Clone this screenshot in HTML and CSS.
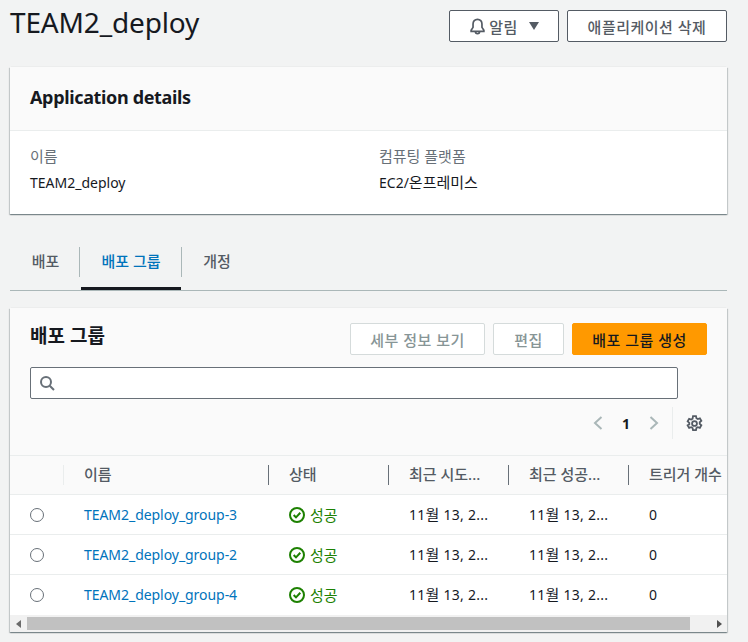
FILE: index.html
```html
<!DOCTYPE html>
<html lang="ko">
<head>
    <meta charset="UTF-8">
    <meta name="viewport" content="width=device-width, initial-scale=1.0">
    <title>TEAM2_deploy</title>
    <link rel="stylesheet" href="styles.css">
</head>
<body>
    <div class="page">
        <header class="page-head">
            <h1>TEAM2_deploy</h1>
            <div class="page-actions">
                <button class="btn btn-notify">
                    <svg class="bell" viewBox="0 0 16 16" width="17" height="17"><path d="M8 1.200c-2.600 0-4.200 2-4.200 4.400v3.200L2 11.600v.9h12v-.9l-1.800-2.800V5.600C12.200 3.200 10.600 1.200 8 1.200zM6 12.500c0 1.300.9 2.300 2 2.300s2-1 2-2.300"/></svg>
                    <span>알림</span>
                    <span class="caret"></span>
                </button>
                <button class="btn btn-delete">애플리케이션 삭제</button>
            </div>
        </header>

        <section class="card details">
            <div class="card-head"><h2>Application details</h2></div>
            <div class="detail-grid">
                <div class="detail">
                    <div class="detail-label">이름</div>
                    <div class="detail-value">TEAM2_deploy</div>
                </div>
                <div class="detail">
                    <div class="detail-label">컴퓨팅 플랫폼</div>
                    <div class="detail-value">EC2/<span class="ko">온프레미스</span></div>
                </div>
            </div>
        </section>

        <nav class="tabs">
            <a class="tab tab-first">배포</a>
            <a class="tab tab-active">배포 그룹</a>
            <a class="tab tab-last">개정</a>
        </nav>

        <section class="card groups">
            <div class="groups-top">
                <h2>배포 그룹</h2>
                <div class="groups-actions">
                    <button class="btn btn-disabled btn-detail">세부 정보 보기</button>
                    <button class="btn btn-disabled btn-edit">편집</button>
                    <button class="btn btn-primary">배포 그룹 생성</button>
                </div>
            </div>
            <div class="search">
                <svg viewBox="0 0 16 16" width="16" height="16"><circle cx="7" cy="7" r="5"/><path d="M10.700 10.700 15 15"/></svg>
            </div>
            <div class="pager">
                <svg class="pager-arrow" viewBox="0 0 10 16" width="10" height="16"><path d="M8.500 2 2 8l6.500 6"/></svg>
                <span class="pager-num">1</span>
                <svg class="pager-arrow" viewBox="0 0 10 16" width="10" height="16"><path d="M1.500 2 8 8l-6.500 6"/></svg>
                <span class="pager-sep">
                    <svg class="gear" viewBox="0 0 16 16" width="17" height="17"><path d="M6.600 1h2.800l.4 2 1.300.75 1.950-.65 1.400 2.400-1.550 1.350v1.500l1.550 1.350-1.400 2.400-1.950-.65-1.300.75-.4 2H6.600l-.4-2-1.300-.75-1.950.65-1.400-2.400L3.100 8.850v-1.500L1.550 6 2.950 3.600l1.950.65 1.300-.75z"/><circle cx="8" cy="8" r="2.300"/></svg>
                </span>
            </div>
            <div class="table">
                <div class="row row-head">
                    <div class="cell cell-radio"></div>
                    <div class="cell cell-name">이름</div>
                    <div class="cell cell-status">상태</div>
                    <div class="cell cell-date">최근 시도...</div>
                    <div class="cell cell-date">최근 성공...</div>
                    <div class="cell cell-count">트리거 개수</div>
                </div>
                <div class="row">
                    <div class="cell cell-radio"><span class="radio"></span></div>
                    <div class="cell cell-name"><a>TEAM2_deploy_group-3</a></div>
                    <div class="cell cell-status"><span class="status"><svg viewBox="0 0 16 16" width="16" height="16"><circle cx="8" cy="8" r="7"/><path d="m4.700 8 2.300 2.400 4.300-4.600"/></svg>성공</span></div>
                    <div class="cell cell-date"><span>11<span class="ko">월</span> 13, 2...</span></div>
                    <div class="cell cell-date"><span>11<span class="ko">월</span> 13, 2...</span></div>
                    <div class="cell cell-count">0</div>
                </div>
                <div class="row">
                    <div class="cell cell-radio"><span class="radio"></span></div>
                    <div class="cell cell-name"><a>TEAM2_deploy_group-2</a></div>
                    <div class="cell cell-status"><span class="status"><svg viewBox="0 0 16 16" width="16" height="16"><circle cx="8" cy="8" r="7"/><path d="m4.700 8 2.300 2.400 4.300-4.600"/></svg>성공</span></div>
                    <div class="cell cell-date"><span>11<span class="ko">월</span> 13, 2...</span></div>
                    <div class="cell cell-date"><span>11<span class="ko">월</span> 13, 2...</span></div>
                    <div class="cell cell-count">0</div>
                </div>
                <div class="row row-last">
                    <div class="cell cell-radio"><span class="radio"></span></div>
                    <div class="cell cell-name"><a>TEAM2_deploy_group-4</a></div>
                    <div class="cell cell-status"><span class="status"><svg viewBox="0 0 16 16" width="16" height="16"><circle cx="8" cy="8" r="7"/><path d="m4.700 8 2.300 2.400 4.300-4.600"/></svg>성공</span></div>
                    <div class="cell cell-date"><span>11<span class="ko">월</span> 13, 2...</span></div>
                    <div class="cell cell-date"><span>11<span class="ko">월</span> 13, 2...</span></div>
                    <div class="cell cell-count">0</div>
                </div>
            </div>
            <div class="scrollbar">
                <span class="scroll-arrow scroll-left"></span>
                <span class="scroll-thumb"></span>
                <span class="scroll-arrow scroll-right"></span>
            </div>
        </section>
    </div>
</body>
</html>
```

FILE: styles.css
```css
* {
    box-sizing: border-box;
}
html, body {
    height: 100%;
}
body {
    margin: 0;
    background-color: #f2f3f3;
    color: #16191f;
    font-family: 'Noto Sans', 'Noto Sans CJK KR', sans-serif;
    font-size: 14px;
    overflow: hidden;
}
.ko {
    font-size: 15px;
    line-height: 1;
}
.page {
    width: 717px;
    margin-left: 10px;
}
.page-head {
    display: flex;
    justify-content: space-between;
    height: 67px;
    padding-top: 10px;
}
h1 {
    margin: 0;
    font-size: 28px;
    font-weight: 400;
    line-height: 24px;
    letter-spacing: -0.15px;
}
h2 {
    margin: 0;
    font-size: 19px;
    font-weight: 700;
}
.page-actions {
    display: flex;
    gap: 8px;
}
.btn {
    height: 32px;
    padding: 0;
    border: 1px solid #545b64;
    border-radius: 2px;
    background-color: #fff;
    color: #545b64;
    font-family: inherit;
    font-size: 15px;
    font-weight: 500;
    letter-spacing: 0.5px;
    display: flex;
    align-items: center;
    justify-content: center;
}
.btn-notify {
    width: 110px;
    gap: 3px;
}
.btn-delete {
    width: 160px;
}
.bell {
    fill: none;
    stroke: #545b64;
    stroke-width: 1.600;
}
.caret {
    width: 0;
    height: 0;
    margin-left: 8px;
    border-left: 5px solid transparent;
    border-right: 5px solid transparent;
    border-top: 8px solid #545b64;
}
.card {
    background-color: #fff;
    box-shadow: 0 1px 1px 0 rgba(0, 28, 36, 0.3), 1px 1px 1px 0 rgba(0, 28, 36, 0.15), -1px 1px 1px 0 rgba(0, 28, 36, 0.15), 0 -1px 1px -1px rgba(0, 28, 36, 0.15);
}
.details {
    height: 147px;
}
.card-head {
    height: 64px;
    padding: 0 20px 4px;
    display: flex;
    align-items: center;
    background-color: #fafafa;
    border-bottom: 1px solid #eaeded;
}
.card-head h2 {
    font-size: 18px;
    letter-spacing: -0.35px;
}
.detail-grid {
    display: grid;
    grid-template-columns: 349px 1fr;
    padding: 14px 20px 0;
}
.detail-label {
    color: #687078;
    font-size: 15px;
    line-height: 22px;
}
.detail-value {
    margin-top: 5px;
    line-height: 22px;
}
.tabs {
    display: flex;
    height: 76px;
    margin-top: 1px;
    padding-top: 32px;
    border-bottom: 1px solid #aab7b8;
}
.tab {
    height: 43px;
    color: #545b64;
    font-size: 15px;
    font-weight: 500;
    padding-top: 3px;
    position: relative;
    text-align: center;
    line-height: 22px;
}
.tab-first {
    width: 71px;
}
.tab-active {
    width: 100px;
    color: #0073bb;
    border-bottom: 3px solid #16191f;
    margin-bottom: -1px;
}
.tab-last {
    width: 72px;
}
.tab-first::after, .tab-active::after {
    content: "";
    position: absolute;
    top: 0;
    height: 30px;
    width: 1px;
    background-color: #aab7b8;
}
.tab-first::after {
    right: 1px;
}
.tab-active::after {
    right: -1px;
}
.groups {
    margin-top: 17px;
    height: 324px;
    background-color: #fafafa;
}
.groups-top {
    display: flex;
    justify-content: space-between;
    padding: 15px 20px 0;
    height: 59px;
}
.groups-top h2 {
    margin-top: -1px;
    line-height: 28px;
}
.groups-actions {
    display: flex;
    gap: 8px;
}
.btn-disabled {
    border-color: #d5dbdb;
    color: #879596;
}
.btn-detail {
    width: 135px;
}
.btn-edit {
    width: 71px;
}
.btn-primary {
    width: 135px;
    border-color: #ff9900;
    background-color: #ff9900;
    color: #16191f;
}
.search {
    width: 648px;
    height: 32px;
    margin-left: 20px;
    border: 1px solid #687078;
    border-radius: 2px;
    background-color: #fff;
    display: flex;
    align-items: center;
    padding-left: 8px;
}
.search svg {
    fill: none;
    stroke: #687078;
    stroke-width: 2;
}
.pager {
    display: flex;
    align-items: center;
    justify-content: flex-end;
    height: 32px;
    margin-top: 8px;
    padding-right: 24px;
}
.pager-arrow {
    fill: none;
    stroke: #aab7b8;
    stroke-width: 2;
}
.pager-num {
    width: 46px;
    text-align: center;
    font-weight: 700;
}
.pager-sep {
    display: flex;
    align-items: center;
    height: 32px;
    margin-left: 13px;
    padding-left: 13px;
    border-left: 1px solid #eaeded;
}
.gear {
    fill: none;
    stroke: #545b64;
    stroke-width: 1.700;
}
.table {
    margin-top: 16px;
    overflow: hidden;
}
.row {
    display: flex;
    height: 40px;
    background-color: #fff;
    border-bottom: 1px solid #eaeded;
}
.row-last {
    border-bottom-color: transparent;
}
.row-head {
    border-top: 1px solid #eaeded;
    background-color: #fafafa;
    color: #545b64;
    font-size: 15px;
    font-weight: 500;
}
.row-head .cell {
    padding-bottom: 3px;
}
.cell {
    display: flex;
    align-items: center;
    flex: none;
    padding-left: 20px;
    position: relative;
}
.cell-radio {
    width: 54px;
}
.cell-name {
    width: 205px;
}
.cell-status, .cell-date, .cell-count {
    width: 120px;
}
.cell-date {
    letter-spacing: 0.25px;
}
.row-head .cell-date {
    letter-spacing: 0;
}
.row-head .cell + .cell::before {
    content: "";
    position: absolute;
    left: -1px;
    top: 9px;
    height: 20px;
    width: 1px;
    background-color: #687078;
}
.row-head .cell-name::before {
    background-color: #eaeded !important;
}
.radio {
    width: 14px;
    height: 14px;
    border: 1px solid #687078;
    border-radius: 50%;
    background-color: #fff;
}
.cell-name a {
    color: #0073bb;
    letter-spacing: -0.05px;
}
.status {
    display: flex;
    align-items: center;
    gap: 5px;
    color: #1d8102;
    font-size: 15px;
}
.status svg {
    fill: none;
    stroke: #1d8102;
    stroke-width: 2;
}
.scrollbar {
    display: flex;
    align-items: center;
    height: 17px;
    background-color: #f1f1f1;
}
.scroll-thumb {
    width: 663px;
    height: 13px;
    margin-left: 6px;
    background-color: #c1c1c1;
}
.scroll-arrow {
    width: 0;
    height: 0;
    border-top: 4px solid transparent;
    border-bottom: 4px solid transparent;
}
.scroll-left {
    margin-left: 6px;
    border-right: 5px solid #6b6b6b;
}
.scroll-right {
    margin-left: 27px;
    border-left: 5px solid #505050;
}
```
